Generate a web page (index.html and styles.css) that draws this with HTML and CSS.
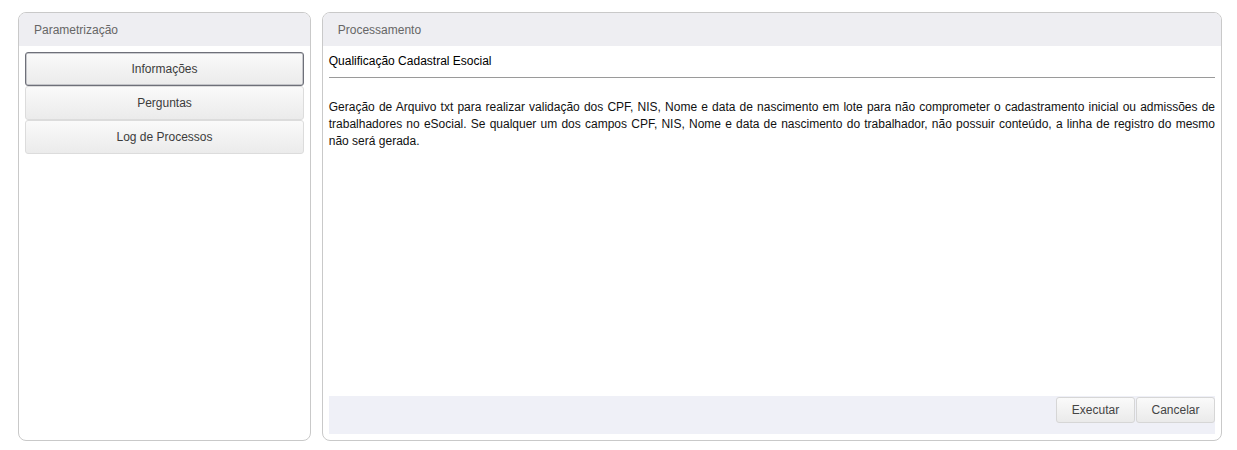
FILE: index.html
```html
<!DOCTYPE html>
<html lang="pt-BR">
<head>
<meta charset="utf-8">
<title>Qualificação Cadastral Esocial</title>
<link rel="stylesheet" href="styles.css">
</head>
<body>
<div class="page">
  <section class="panel panel-side">
    <div class="panel-header">Parametrização</div>
    <div class="side-body">
      <button class="side-btn active">Informações</button>
      <button class="side-btn">Perguntas</button>
      <button class="side-btn">Log de Processos</button>
    </div>
  </section>
  <section class="panel panel-main">
    <div class="panel-header">Processamento</div>
    <div class="main-body">
      <div class="title">Qualificação Cadastral Esocial</div>
      <p class="desc">Geração de Arquivo txt para realizar validação dos CPF, NIS, Nome e data de nascimento em lote para não comprometer o cadastramento inicial ou admissões de trabalhadores no eSocial. Se qualquer um dos campos CPF, NIS, Nome e data de nascimento do trabalhador, não possuir conteúdo, a linha de registro do mesmo não será gerada.</p>
      <div class="footer">
        <button class="act-btn">Executar</button>
        <button class="act-btn">Cancelar</button>
      </div>
    </div>
  </section>
</div>
</body>
</html>
```
FILE: styles.css
```css
* { box-sizing: border-box; }
html, body { margin: 0; padding: 0; background: #fff; }
body {
  font-family: "Liberation Sans", Arial, sans-serif;
  font-size: 12px;
  color: #000;
}
.page {
  display: flex;
  gap: 11px;
  padding: 12px 15px 0 18px;
  height: 441px;
}
.panel {
  border: 1px solid #c9c9c9;
  border-radius: 8px;
  background: #fff;
  display: flex;
  flex-direction: column;
  overflow: hidden;
}
.panel-side { width: 293px; }
.panel-main { width: 901px; }
.panel-header {
  height: 33px;
  background: #eeeef2;
  color: #666;
  padding: 10px 0 0 15px;
  flex: none;
}
.side-body {
  display: flex;
  flex-direction: column;
  padding: 6px 6px 0 6px;
  gap: 0;
}
.side-btn {
  font-family: inherit;
  font-size: 12px;
  color: #3c3c3c;
  height: 34px;
  width: 279px;
  border: 1px solid #dcdcdc;
  border-radius: 3px;
  background: linear-gradient(#fafafa, #ebebeb);
  padding: 0;
  text-align: center;
}
.side-btn.active {
  border: 1px solid #6e7079;
  box-shadow: inset 0 0 0 0.5px #9a9ca4;
}
.main-body {
  flex: 1;
  display: flex;
  flex-direction: column;
  padding: 8px 6px 6px 6px;
}
.title {
  padding-bottom: 9px;
  border-bottom: 1px solid #9a9a9a;
  line-height: 14px;
}
.desc {
  margin: 21px 0 0;
  text-align: justify;
  line-height: 17px;
  color: #111;
  flex: 1;
}
.footer {
  height: 38px;
  background: #eff0f7;
  display: flex;
  justify-content: flex-end;
  align-items: flex-start;
  padding-top: 1px;
  gap: 1px;
}
.act-btn {
  font-family: inherit;
  font-size: 12px;
  color: #444;
  width: 79px;
  height: 26px;
  border: 1px solid #d6d6d6;
  border-radius: 3px;
  background: linear-gradient(#fafafa, #eaeaea);
  padding: 0;
}
```
